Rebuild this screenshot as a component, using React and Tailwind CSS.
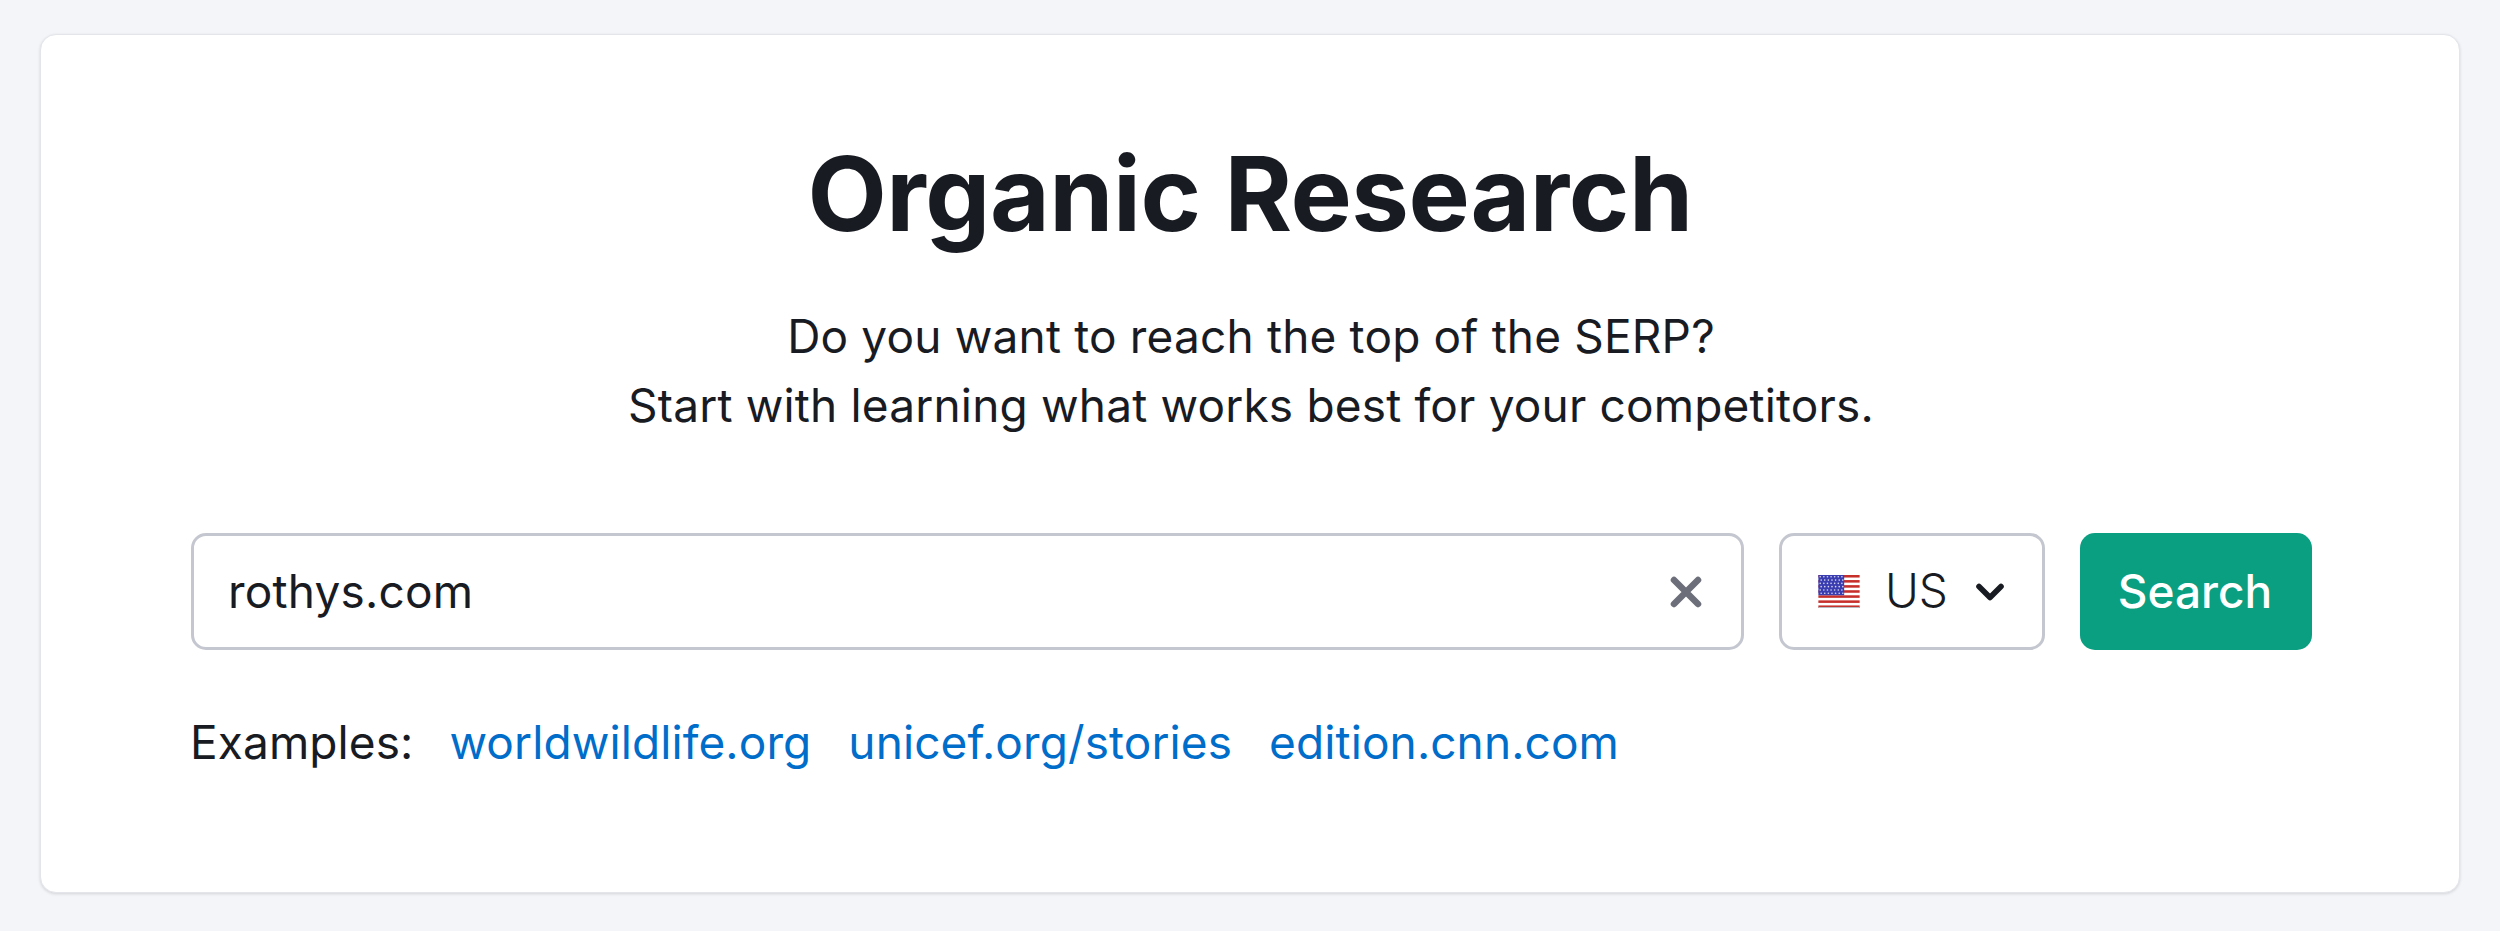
import React from "react";

function Flag() {
  const stripes = [0, 2, 4, 6, 8, 10, 12];
  const stars = [];
  for (let r = 0; r < 6; r++) {
    for (let c = 0; c < 7; c++) {
      stars.push(<circle key={r + "-" + c} cx={1.8 + c * 3.5 + (r % 2 ? 0.9 : 0)} cy={1.7 + r * 3.2} r="0.8" fill="#d6d6f0" />);
    }
  }
  return (
    <svg width="42" height="33" viewBox="0 0 40 32" className="shrink-0">
      <rect width="40" height="32" fill="#fff" />
      {stripes.map((i) => (
        <rect key={i} x="0" y={i * 2.46} width="40" height="2.46" fill="#c62f2a" />
      ))}
      <rect width="25" height="19.6" fill="#3a3db0" />
      {stars}
      <rect x="0" y="31" width="40" height="1" fill="#b9b9c0" />
    </svg>
  );
}

export default function App() {
  return (
    <div className="min-h-[931px] bg-[#f4f5f9] px-[40px] pt-[34px] font-['Inter','Liberation_Sans',sans-serif] text-[#191b23]">
      <div className="flex h-[859px] flex-col rounded-[16px] border border-[#e3e5eb] bg-white pr-[140px] pl-[150px] pt-[99px] shadow-[0_1px_3px_rgba(25,27,35,0.15)]">
        <h1 className="ml-[-10px] text-center text-[103px] leading-[120px] font-bold tracking-[-0.45px]">Organic Research</h1>
        <div className="mt-[48px] ml-[-8px] text-center text-[46px] leading-[69px] tracking-[0.17px]">
          <p>Do you want to reach the top of the SERP?</p>
          <p>Start with learning what works best for your competitors.</p>
        </div>
        <div className="mt-[93px] flex h-[117px] items-stretch gap-[35px]">
          <div className="flex w-[1553px] shrink-0 items-center justify-between rounded-[15px] border-[3px] border-[#c4c7cf] pr-[38px] pl-[34px]">
            <span className="text-[46px] tracking-[0.2px]">rothys.com</span>
            <svg width="34" height="34" viewBox="0 0 34 34">
              <path d="M5 5 L29 29 M29 5 L5 29" stroke="#6c6e79" strokeWidth="6.5" strokeLinecap="round" />
            </svg>
          </div>
          <div className="flex w-[266px] shrink-0 items-center rounded-[15px] border-[3px] border-[#c4c7cf] pl-[36px]">
            <Flag />
            <span className="ml-[25px] pb-[3px] text-[46px] leading-none font-light">US</span>
            <svg className="ml-[28px]" width="28" height="18" viewBox="0 0 28 18">
              <path d="M3 3.5 L14 14.5 L25 3.5" fill="none" stroke="#191b23" strokeWidth="5.6" strokeLinecap="round" strokeLinejoin="round" />
            </svg>
          </div>
          <button className="w-[232px] shrink-0 rounded-[15px] bg-[#0a9f81] pr-[2px] text-[46px] font-medium text-white">Search</button>
        </div>
        <div className="mt-[60px] ml-[-1px] flex items-center text-[46px] leading-[64px] tracking-[0.1px]">
          <span>Examples:</span>
          <a className="ml-[36px] text-[#006dca]">worldwildlife.org</a>
          <a className="ml-[37px] text-[#006dca]">unicef.org/stories</a>
          <a className="ml-[37px] text-[#006dca]">edition.cnn.com</a>
        </div>
      </div>
    </div>
  );
}
